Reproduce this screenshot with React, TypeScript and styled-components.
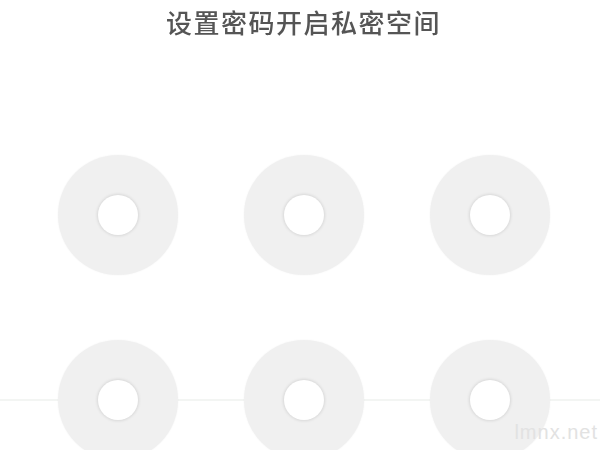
import React from "react";
import styled, { createGlobalStyle } from "styled-components";

const GlobalStyle = createGlobalStyle`
  html, body {
    margin: 0;
    padding: 0;
    background: #ffffff;
  }
`;

const Screen = styled.div`
  position: relative;
  width: 600px;
  height: 450px;
  overflow: hidden;
  background: #ffffff;
  display: flex;
  flex-direction: column;
  align-items: center;
`;

const Title = styled.h1`
  margin: 0;
  padding: 8px 0 0 7px;
  font-family: "Noto Sans CJK SC", "Liberation Sans", sans-serif;
  font-size: 26px;
  line-height: 27px;
  font-weight: 500;
  letter-spacing: 1.5px;
  color: #555555;
  filter: blur(0.6px);
`;

const Pad = styled.div`
  width: 100%;
  display: flex;
  flex-direction: column;
  gap: 65px;
  margin-top: 120px;
`;

const Row = styled.div<{ $divider?: boolean }>`
  width: 100%;
  box-sizing: border-box;
  display: flex;
  gap: 66px;
  padding-left: 58px;
  background: ${(p) =>
    p.$divider
      ? "linear-gradient(to bottom, transparent 49%, #f3f5f3 49%, #f3f5f3 51%, transparent 51%)"
      : "none"};
`;

const Dot = styled.div`
  width: 120px;
  height: 120px;
  border-radius: 50%;
  background: #f0f0f0;
  box-shadow: 0 0 2px rgba(0, 0, 0, 0.05);
  display: flex;
  align-items: center;
  justify-content: center;
`;

const Hole = styled.div`
  width: 40px;
  height: 40px;
  border-radius: 50%;
  background: #ffffff;
  box-shadow: 0 0 3px 1px rgba(0, 0, 0, 0.1);
`;

const Watermark = styled.div`
  position: absolute;
  right: 2px;
  bottom: 6px;
  font-family: "Liberation Sans", sans-serif;
  font-size: 20px;
  letter-spacing: 1px;
  color: #e2e2e2;
`;

const rows = [[0, 1, 2], [3, 4, 5]];

const App: React.FC = () => {
  return (
    <>
      <GlobalStyle />
      <Screen>
        <Title>设置密码开启私密空间</Title>
        <Pad>
          {rows.map((r, i) => (
            <Row key={i} $divider={i === 1}>
              {r.map((n) => (
                <Dot key={n}>
                  <Hole />
                </Dot>
              ))}
            </Row>
          ))}
        </Pad>
        <Watermark>lmnx.net</Watermark>
      </Screen>
    </>
  );
};

export default App;
